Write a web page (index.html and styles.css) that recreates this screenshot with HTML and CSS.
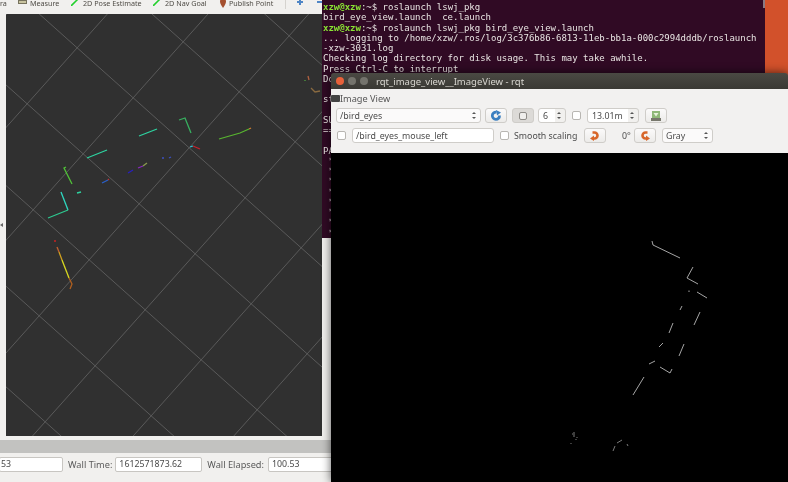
FILE: index.html
```html
<!DOCTYPE html>
<html lang="en">
<head>
    <meta charset="UTF-8">
    <title>rviz and rqt_image_view</title>
    <link rel="stylesheet" href="styles.css">
</head>
<body>
<div class="desktop">
    <!-- rviz window, sits at the back -->
    <div class="rviz">
        <div class="tools">
            <span class="tool tool-cut">ra</span>
            <span class="tool tool-measure"><i class="ruler"></i>Measure</span>
            <span class="tool tool-pose">
                <svg class="tool-arrow" width="9" height="8" viewBox="0 0 9 8"><path d="M0 8 L5 3 L8 0" stroke="#22d02c" stroke-width="1.6" fill="none"/></svg>
                2D Pose Estimate
            </span>
            <span class="tool tool-goal">
                <svg class="tool-arrow" width="9" height="8" viewBox="0 0 9 8"><path d="M0 8 L5 3 L8 0" stroke="#22d02c" stroke-width="1.6" fill="none"/></svg>
                2D Nav Goal
            </span>
            <span class="tool tool-pin">
                <svg width="6" height="9" viewBox="0 0 6 9"><path d="M0 2.5 A3 3 0 0 1 6 2.5 Q6 4.5 3 9 Q0 4.5 0 2.5Z" fill="#a5502f"/></svg>
                Publish Point
            </span>
            <span class="tool-sep"></span>
            <svg class="tool-plus" width="8" height="8" viewBox="0 0 8 8"><path d="M3 1h2v2h2v2H5v2H3V5H1V3h2z" fill="#4f86c6"/></svg>
            <span class="tool-minus"></span>
        </div>
        <div class="rviz-main">
            <div class="rviz-left"><i class="handle"></i></div>
            <svg class="view" viewBox="6 14 316 422" width="316" height="422">
                <g class="grid">
                    <line x1="-478" y1="156" x2="306" y2="856"/>
                    <line x1="-428" y1="100" x2="356" y2="800"/>
                    <line x1="-378" y1="44" x2="406" y2="744"/>
                    <line x1="-328" y1="-12" x2="456" y2="688"/>
                    <line x1="-278" y1="-68" x2="506" y2="632"/>
                    <line x1="-228" y1="-124" x2="556" y2="576"/>
                    <line x1="-178" y1="-180" x2="606" y2="520"/>
                    <line x1="-128" y1="-236" x2="656" y2="464"/>
                    <line x1="-78" y1="-292" x2="706" y2="408"/>
                    <line x1="-304" y1="362" x2="396" y2="-422"/>
                    <line x1="-248" y1="412" x2="452" y2="-372"/>
                    <line x1="-192" y1="462" x2="508" y2="-322"/>
                    <line x1="-136" y1="512" x2="564" y2="-272"/>
                    <line x1="-80" y1="562" x2="620" y2="-222"/>
                    <line x1="-24" y1="612" x2="676" y2="-172"/>
                    <line x1="32" y1="662" x2="732" y2="-122"/>
                </g>
                <g class="scan">
                    <polyline points="139,136 157,129" stroke="#2ed3a0"/>
                    <polyline points="87,158 107,150" stroke="#2ed3a0"/>
                    <polyline points="179,120 185,118 191,133" stroke="#38b060"/>
                    <polyline points="219,139 240,133 249,129" stroke="#58b530"/>
                    <polyline points="249,129 251,128" stroke="#d08030"/>
                    <polyline points="190,147 193,146" stroke="#25c8d8"/>
                    <polyline points="193,146 200,149" stroke="#c8202c"/>
                    <polyline points="162,158 164,158" stroke="#3c50c0"/>
                    <polyline points="169,158 171,157" stroke="#3c50c0"/>
                    <polyline points="138,168 143,166" stroke="#8a28c0"/>
                    <polyline points="143,166 147,163" stroke="#8a9a50"/>
                    <polyline points="128,173 133,170" stroke="#2820c0"/>
                    <polyline points="102,183 108,180" stroke="#2a60c8"/>
                    <polyline points="108,180 109,179" stroke="#c03030"/>
                    <polyline points="66,167 64,168 72,184" stroke="#50c038"/>
                    <polyline points="77,193 81,192" stroke="#2ed3a0"/>
                    <polyline points="61,192 68,210" stroke="#2ed8c0"/>
                    <polyline points="68,210 48,218" stroke="#2ec890"/>
                    <polyline points="55,240 55,242" stroke="#e02020"/>
                    <polyline points="57,247 59,252" stroke="#c06030"/>
                    <polyline points="59,252 62,260" stroke="#d0a020"/>
                    <polyline points="62,260 69,278" stroke="#d8d820"/>
                    <polyline points="69,278 72,284 70,289" stroke="#b06020"/>
                    <polyline points="305,80 305,81" stroke="#50a040"/>
                    <polyline points="308,76 309,80" stroke="#b06040"/>
                    <polyline points="311,88 315,92 320,91" stroke="#8a6a40"/>
                </g>
            </svg>
        </div>
        <div class="rviz-gap"></div>
        <div class="rviz-gray"></div>
        <div class="timebar">
            <span class="field field-first">53</span>
            <span class="time-label">Wall Time:</span>
            <span class="field field-wall">1612571873.62</span>
            <span class="time-label">Wall Elapsed:</span>
            <span class="field field-elapsed">100.53</span>
        </div>
    </div>

    <div class="terminal">
        <pre><span class="prompt">xzw@xzw</span>:~$ roslaunch lswj_pkg
bird_eye_view.launch  ce.launch
<span class="prompt">xzw@xzw</span>:~$ roslaunch lswj_pkg bird_eye_view.launch
... logging to /home/xzw/.ros/log/3c376b86-6813-11eb-bb1a-000c2994dddb/roslaunch
-xzw-3031.log
Checking log directory for disk usage. This may take awhile.
Press Ctrl-C to interrupt
Do

st

SU
==

PA
 *
 *
 *
 *
 *
 *
 *
 *</pre>
        <div class="term-scroll"></div>
    </div>

    <div class="rqt">
        <div class="titlebar">
            <i class="dot dot-close"></i><i class="dot"></i><i class="dot"></i>
            <span class="title-text">rqt_image_view__ImageView - rqt</span>
        </div>
        <div class="panel">
            <div class="dock-title"><i class="dock-icon"></i>Image View</div>
            <div class="row row-one">
                <span class="combo combo-topic">/bird_eyes<i class="updown"></i></span>
                <span class="btn btn-refresh">
                    <svg width="12" height="11" viewBox="0 0 12 11"><path d="M9.5 5.5 A3.6 3.6 0 1 1 6.5 2.2" stroke="#3b7fc0" stroke-width="2.8" fill="none"/><path d="M6 0 L11 2.5 L7 5.5Z" fill="#3b7fc0"/></svg>
                </span>
                <span class="btn btn-pause"><i class="pause-box"></i></span>
                <span class="spin spin-six">6<i class="updown"></i></span>
                <i class="check check-fps"></i>
                <span class="spin spin-time">13.01m<i class="updown"></i></span>
                <span class="btn btn-save">
                    <svg width="12" height="12" viewBox="0 0 12 12"><rect x="2" y="1" width="8" height="8" fill="#8fb878"/><path d="M3.5 3h5L6 6.5Z" fill="#e8f2dc"/><rect x="1" y="8" width="10" height="3" fill="#77776c"/></svg>
                </span>
            </div>
            <div class="row row-two">
                <i class="check check-mouse"></i>
                <span class="input-topic">/bird_eyes_mouse_left</span>
                <i class="check check-smooth"></i>
                <span class="smooth-label">Smooth scaling</span>
                <span class="btn btn-rot-right">
                    <svg width="10" height="11" viewBox="0 0 10 11"><path d="M2.5 2.5 H4.5 A3 3 0 0 1 4.5 8.5 H3" stroke="#d8662a" stroke-width="2.6" fill="none"/><path d="M0 8.5 L4 5.5 V11Z" fill="#d8662a"/></svg>
                </span>
                <span class="angle">0°</span>
                <span class="btn btn-rot-left">
                    <svg width="10" height="11" viewBox="0 0 10 11"><path d="M7.5 2.5 H5.5 A3 3 0 0 0 5.5 8.5 H7" stroke="#d8662a" stroke-width="2.6" fill="none"/><path d="M10 8.5 L6 5.5 V11Z" fill="#d8662a"/></svg>
                </span>
                <span class="combo combo-gray">Gray<i class="updown"></i></span>
            </div>
        </div>
        <svg class="image" viewBox="331 153 457 329" width="457" height="329">
            <g class="points">
                <polyline points="652,241 653,245 680,258"/>
                <polyline points="693,267 687,278 698,284"/>
                <polyline points="689,290.5 689,292"/>
                <polyline points="697,292 707,298"/>
                <polyline points="682,306 680,310"/>
                <polyline points="700,312 694,325"/>
                <polyline points="673,323 669,333"/>
                <polyline points="684,344 679,356"/>
                <polyline points="663,343 659,347"/>
                <polyline points="655,361 649,364"/>
                <polyline points="660,367 670,373 672,369"/>
                <polyline points="644,377 633,395"/>
                <polyline class="faint" points="572,434 573,434"/>
                <polyline class="faint" points="574,432 574,437"/>
                <polyline class="faint" points="577,437 577,438"/>
                <polyline class="faint" points="576,439 576,440"/>
                <polyline class="faint" points="571,443 571,444"/>
                <polyline class="faint" points="613,451 615,446"/>
                <polyline class="faint" points="617,443 622,440"/>
                <polyline class="faint" points="627,444 628,446"/>
            </g>
        </svg>
    </div>
</div>
</body>
</html>
```

FILE: styles.css
```css
html, body { margin: 0; padding: 0; height: 100%; background: #000; overflow: hidden; }
.desktop { position: relative; width: 788px; height: 482px; background: #d2512b; overflow: hidden; filter: blur(0.35px); font-family: "Noto Sans", "Open Sans", sans-serif; font-size: 9px; color: #4c4c4c; }

/* rviz */
.rviz { position: absolute; left: 0; top: 0; width: 345px; height: 482px; background: #f1f0ee; display: flex; flex-direction: column; }
.tools { display: flex; align-items: center; height: 17px; margin-top: -3px; flex: none; font-size: 7.2px; line-height: 12px; box-sizing: border-box; padding-bottom: 5px; color: #4f4c46; white-space: nowrap; }
.tool { display: flex; align-items: center; gap: 3px; flex: none; }
.tool-cut { width: 18px; }
.tool-measure { width: 53px; }
.tool-pose { width: 82px; }
.tool-goal { width: 67px; }
.tool-pin { width: 65px; }
.tool-arrow { margin-top: -3px; }
.ruler { width: 9px; height: 4px; background: #c9c4a0; border: 1px solid #77735e; box-sizing: border-box; margin-top: -2px; }
.tool-sep { width: 1px; height: 12px; background: #d5d3cf; margin-right: 10px; flex: none; }
.tool-plus { margin-right: 13px; margin-top: -2px; flex: none; }
.tool-minus { width: 7px; height: 2px; background: #4f86c6; flex: none; margin-top: -2px; }
.rviz-main { display: flex; height: 422px; flex: none; }
.rviz-left { width: 6px; display: flex; align-items: center; }
.handle { border-right: 3px solid #666; border-top: 2px solid transparent; border-bottom: 2px solid transparent; }
.view { display: block; background: #303030; flex: none; }
.grid line { stroke: #656565; stroke-width: 0.8; }
.scan polyline { fill: none; stroke-width: 1.3; }
.rviz-gap { height: 4px; flex: none; }
.rviz-gray { height: 13px; background: #c2c2c0; flex: none; }
.timebar { display: flex; align-items: center; height: 23px; flex: none; font-size: 9.2px; color: #5a5a5a; white-space: nowrap; }
.time-label { flex: none; }
.field { background: #fff; border: 1px solid #c8c6c2; border-radius: 2px; height: 15px; box-sizing: border-box; line-height: 13px; padding-left: 3px; color: #4a4a4a; font-size: 8.8px; flex: none; }
.field-first { width: 64px; margin-right: 5px; margin-left: -1px; padding-left: 1px; }
.field-wall { width: 87px; margin: 0 5px 0 3px; }
.field-elapsed { width: 70px; margin-left: 4px; }

/* terminal */
.terminal { position: absolute; left: 322px; top: 0; width: 443px; height: 238px; background: #300a24; color: #e8e4e2; overflow: hidden; }
.terminal pre { margin: 0; padding: 2px 0 0 1px; font-family: "DejaVu Sans Mono", monospace; font-size: 9px; line-height: 10.25px; }
.prompt { color: #8ae234; font-weight: bold; }
.term-scroll { position: absolute; right: 0; top: 0; width: 2px; height: 8px; background: #8a7a84; }

/* rqt window */
.rqt { position: absolute; left: 331px; top: 73px; width: 457px; height: 409px; box-shadow: 0 0 10px rgba(0,0,0,0.65); display: flex; flex-direction: column; border-radius: 3px 3px 0 0; }
.titlebar { height: 16px; flex: none; background: linear-gradient(#4a4943, #3a3934); display: flex; align-items: center; padding-left: 5px; color: #d8d6d0; font-size: 9.5px; border-radius: 3px 3px 0 0; box-sizing: border-box; }
.dot { width: 8px; height: 8px; border-radius: 50%; background: #74736c; margin-right: 4px; flex: none; }
.dot-close { background: #e8613a; }
.title-text { margin-left: 4px; white-space: nowrap; }
.panel { height: 64px; flex: none; background: #f2f1f0; box-sizing: border-box; padding-left: 5px; white-space: nowrap; }
.dock-title { height: 19px; display: flex; align-items: center; margin-left: -5px; font-size: 9.2px; color: #555; }
.dock-icon { width: 9px; height: 7px; background: #444; border-radius: 1px; flex: none; }
.row { display: flex; align-items: center; }
.row-one { height: 15px; }
.row-two { height: 15px; margin-top: 5px; }
.combo, .spin, .btn, .input-topic { box-sizing: border-box; height: 15px; border: 1px solid #cfcdc9; border-radius: 3px; background: #fbfafa; display: flex; align-items: center; font-size: 8.8px; color: #4c4c4c; flex: none; position: relative; }
.btn { justify-content: center; background: linear-gradient(#fbfafa, #ecebe9); }
.combo { padding-left: 3px; }
.updown { position: absolute; right: 3px; top: 3px; width: 5px; height: 7px; }
.updown::before, .updown::after { content: ""; position: absolute; left: 0; border-left: 2.5px solid transparent; border-right: 2.5px solid transparent; }
.updown::before { top: 0; border-bottom: 2.5px solid #555; }
.updown::after { bottom: 0; border-top: 2.5px solid #555; }
.combo-topic { width: 145px; }
.btn-refresh { width: 22px; margin-left: 4px; }
.btn-pause { width: 22px; margin-left: 5px; background: #dcdad7; }
.pause-box { width: 8px; height: 8px; border: 1px solid #8d8b87; border-radius: 2px; box-sizing: border-box; background: #efeeec; }
.spin { padding-left: 4px; background: linear-gradient(to right, #fff calc(100% - 10px), #f1f0ee calc(100% - 10px)); }
.spin-six { width: 28px; margin-left: 4px; }
.check { width: 9px; height: 9px; border: 1px solid #b8b6b2; border-radius: 2px; background: #fff; box-sizing: border-box; flex: none; }
.check-fps { margin-left: 6px; }
.spin-time { width: 52px; margin-left: 6px; }
.btn-save { width: 22px; margin-left: 6px; }
.check-mouse { margin-left: 1px; }
.input-topic { width: 142px; margin-left: 6px; padding-left: 3px; background: #fff; }
.check-smooth { margin-left: 6px; }
.smooth-label { margin-left: 5px; width: 65px; font-size: 8.8px; flex: none; }
.btn-rot-right { width: 22px; margin-left: 5px; }
.angle { margin-left: 16px; width: 12px; font-size: 8.8px; flex: none; }
.btn-rot-left { width: 22px; }
.combo-gray { width: 51px; margin-left: 6px; }
.image { display: block; background: #000; flex: none; }
.points polyline { fill: none; stroke: #cfcfcf; stroke-width: 0.8; }
.points .faint { stroke: #9a9a9a; }
```
